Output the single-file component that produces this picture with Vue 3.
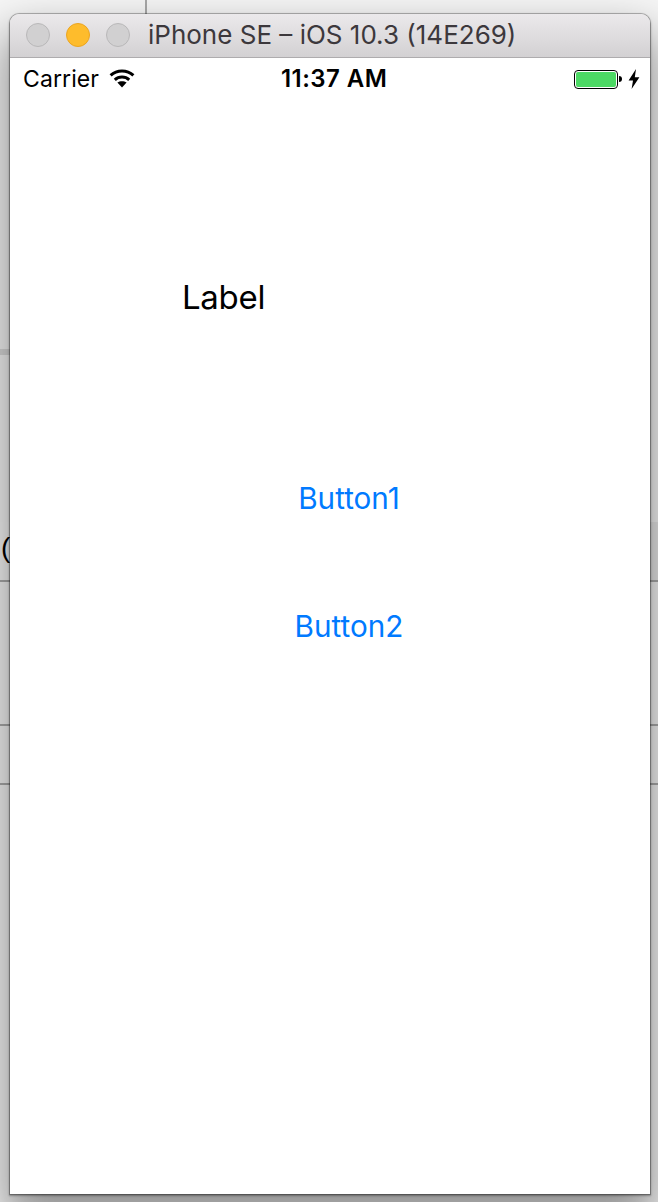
<template>
  <div class="desktop">
    <i class="vline"></i>
    <i class="hline h1"></i>
    <i class="hline h2"></i>
    <i class="hline h3"></i>
    <i class="hline h4"></i>
    <i class="band band-left"></i>
    <i class="band band-right"></i>
    <span class="paren">(</span>
    <div class="window">
      <header class="titlebar">
        <div class="lights">
          <span class="light"></span>
          <span class="light amber"></span>
          <span class="light"></span>
        </div>
        <span class="title">iPhone SE – iOS 10.3 (14E269)</span>
      </header>
      <main class="screen">
        <div class="status">
          <div class="left">
            <span class="carrier">Carrier</span>
            <svg class="wifi" width="26" height="20" viewBox="0 0 26 20">
              <path d="M1.6 7.4C8 1.4 18 1.4 24.4 7.4" fill="none" stroke="#000" stroke-width="3" />
              <path d="M5.8 11.8C9.8 8.2 16.2 8.2 20.2 11.8" fill="none" stroke="#000" stroke-width="3" />
              <path d="M8.4 14.6C11 12.8 15 12.8 17.6 14.6L13 19.4Z" fill="#000" />
            </svg>
          </div>
          <span class="time">11:37 AM</span>
          <div class="right">
            <div class="battery"><div class="charge"></div></div>
            <span class="nub"></span>
            <svg class="bolt" width="12" height="20" viewBox="0 0 12 20">
              <path d="M8 0L.6 11.4H5L3.6 20L11.4 8.2H6.8Z" fill="#000" />
            </svg>
          </div>
        </div>
        <div class="content">
          <div class="label">Label</div>
          <button class="btn first">Button1</button>
          <button class="btn second">Button2</button>
        </div>
      </main>
    </div>
  </div>
</template>

<script setup>
</script>

<style>
html, body { margin: 0; background: #f6f6f6; }
</style>

<style scoped>
.desktop {
  position: relative;
  width: 658px;
  height: 1202px;
  overflow: hidden;
  padding: 14px 8px 8px 10px;
  box-sizing: border-box;
  background: #f6f6f6;
  font-family: Inter, "Liberation Sans", sans-serif;
}
.vline { position: absolute; left: 145px; top: 0; width: 2px; height: 16px; background: #a8a8a8; }
.hline { position: absolute; left: 0; width: 658px; height: 2px; background: #6e6e6e; opacity: .55; z-index: 0; }
.h1 { top: 349px; width: 10px; height: 6px; opacity: .2; }
.h2 { top: 580px; }
.h3 { top: 724px; }
.h4 { top: 783px; }
.band { position: absolute; top: 522px; width: 10px; height: 58px; }
.band-left { left: 0; background: rgba(255,255,255,.12); }
.band-right { right: 0; background: rgba(0,0,0,.05); }
.paren { position: absolute; left: 1px; top: 530px; font: 28px/36px "Liberation Sans", sans-serif; color: #000; }
.window {
  position: relative;
  z-index: 1;
  width: 640px;
  height: 1180px;
  display: flex;
  flex-direction: column;
  border-radius: 9px 9px 0 0;
  box-shadow: 0 0 0 1px rgba(0,0,0,.22), 0 1px 2px 1px rgba(0,0,0,.3), 0 24px 46px 6px rgba(0,0,0,.42);
}
.titlebar {
  height: 44px;
  box-sizing: border-box;
  flex: none;
  display: flex;
  align-items: center;
  padding: 0 0 1px 16px;
  gap: 18px;
  border-radius: 9px 9px 0 0;
  background: linear-gradient(#ebe9eb, #d3d1d3);
  border-bottom: 1px solid #aeacae;
}
.lights { display: flex; gap: 16px; }
.light {
  width: 24px;
  height: 24px;
  box-sizing: border-box;
  border-radius: 50%;
  background: #d1d0d1;
  border: 1px solid #b9b8b9;
}
.amber { background: #febc2c; border-color: #eba521; }
.title { font-size: 26px; line-height: 30px; color: #3c383c; white-space: nowrap; }
.screen { flex: 1; background: #fff; display: flex; flex-direction: column; }
.status {
  height: 42px;
  flex: none;
  position: relative;
  display: flex;
  align-items: center;
  justify-content: space-between;
  padding: 0 10px 0 13px;
  box-sizing: border-box;
  color: #000;
}
.left { display: flex; align-items: center; gap: 10px; }
.carrier { font-size: 23px; line-height: 28px; letter-spacing: .1px; }
.wifi { display: block; margin-top: -2px; }
.time {
  position: absolute;
  left: 271px;
  font-size: 24px;
  line-height: 28px;
  font-weight: 600;
  letter-spacing: .45px;
  white-space: nowrap;
}
.right { display: flex; align-items: center; }
.battery {
  width: 44px;
  height: 19px;
  box-sizing: border-box;
  padding: 1px;
  border: 1px solid #000;
  border-radius: 4px;
}
.charge { height: 100%; background: #4cd964; border-radius: 2px; }
.nub { width: 3px; height: 6px; background: #000; border-radius: 0 3px 3px 0; margin: 0 6px 0 1px; }
.bolt { display: block; }
.content { flex: 1; display: flex; flex-direction: column; align-items: flex-start; padding-top: 177px; }
.label { margin-left: 172px; font-size: 33px; line-height: 40px; color: #000; letter-spacing: -.3px; }
.btn {
  align-self: center;
  margin: 0 0 0 38px;
  padding: 0;
  border: 0;
  background: none;
  color: #007aff;
  font: 400 29.7px/36px Inter, "Liberation Sans", sans-serif;
}
.first { margin-top: 163px; }
.second { margin-top: 92px; }
</style>
